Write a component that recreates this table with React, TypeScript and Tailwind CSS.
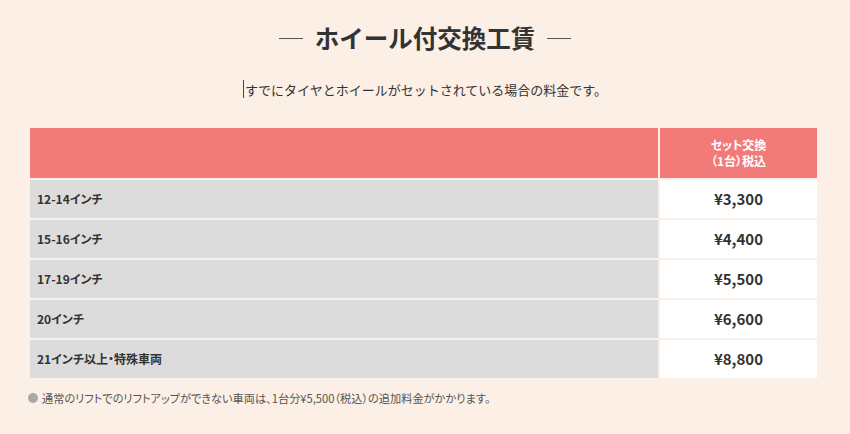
const rows = [
  { size: "12-14インチ", price: "¥3,300" },
  { size: "15-16インチ", price: "¥4,400" },
  { size: "17-19インチ", price: "¥5,500" },
  { size: "20インチ", price: "¥6,600" },
  { size: "21インチ以上・特殊車両", price: "¥8,800" },
]

const App = () => {
  return (
    <div
      className="w-[850px] h-[434px] bg-[#fcefe5] text-[#333] overflow-hidden"
      style={{ fontFamily: '"Noto Sans CJK JP", "Noto Sans", sans-serif' }}
    >
      <div className="flex justify-center items-center gap-[12px] pt-[19px] h-[58px]">
        <span className="w-[24px] h-[1.5px] bg-[#555]"></span>
        <h1 className="text-[24.5px] font-bold leading-none">ホイール付交換工賃</h1>
        <span className="w-[24px] h-[1.5px] bg-[#555]"></span>
      </div>
      <div className="flex justify-center items-center mt-[21px] h-[20px]">
        <span className="w-px h-[18px] bg-[#444] mr-px"></span>
        <p className="text-[13px] leading-none">すでにタイヤとホイールがセットされている場合の料金です。</p>
      </div>
      <div className="mx-[30px] w-[787px] mt-[29px] flex flex-col gap-[2px]">
        <div className="flex gap-[2px] h-[50px]">
          <div className="flex-1 bg-[#f27b79]"></div>
          <div className="w-[157px] bg-[#f27b79] flex flex-col items-center justify-center text-white text-[12px] font-bold leading-[16px] [font-feature-settings:'palt']">
            <span>セット交換</span>
            <span>（1台）税込</span>
          </div>
        </div>
        {rows.map((r) => (
          <div key={r.size} className="flex gap-[2px] h-[38px]">
            <div className="flex-1 bg-[#dcdcdc] flex items-center pl-[7px] text-[12px] font-bold [font-feature-settings:'palt']">
              {r.size}
            </div>
            <div className="w-[157px] bg-white flex items-center justify-center text-[15px] font-bold">
              {r.price}
            </div>
          </div>
        ))}
      </div>
      <div className="flex items-center ml-[28px] mt-[12px] text-[11.2px] text-[#555] [font-feature-settings:'palt']">
        <span className="w-[10px] h-[10px] rounded-full bg-[#a9a9a9] mr-[4px]"></span>
        <span>通常のリフトでのリフトアップができない車両は、1台分¥5,500（税込）の追加料金がかかります。</span>
      </div>
    </div>
  )
}

export default App
